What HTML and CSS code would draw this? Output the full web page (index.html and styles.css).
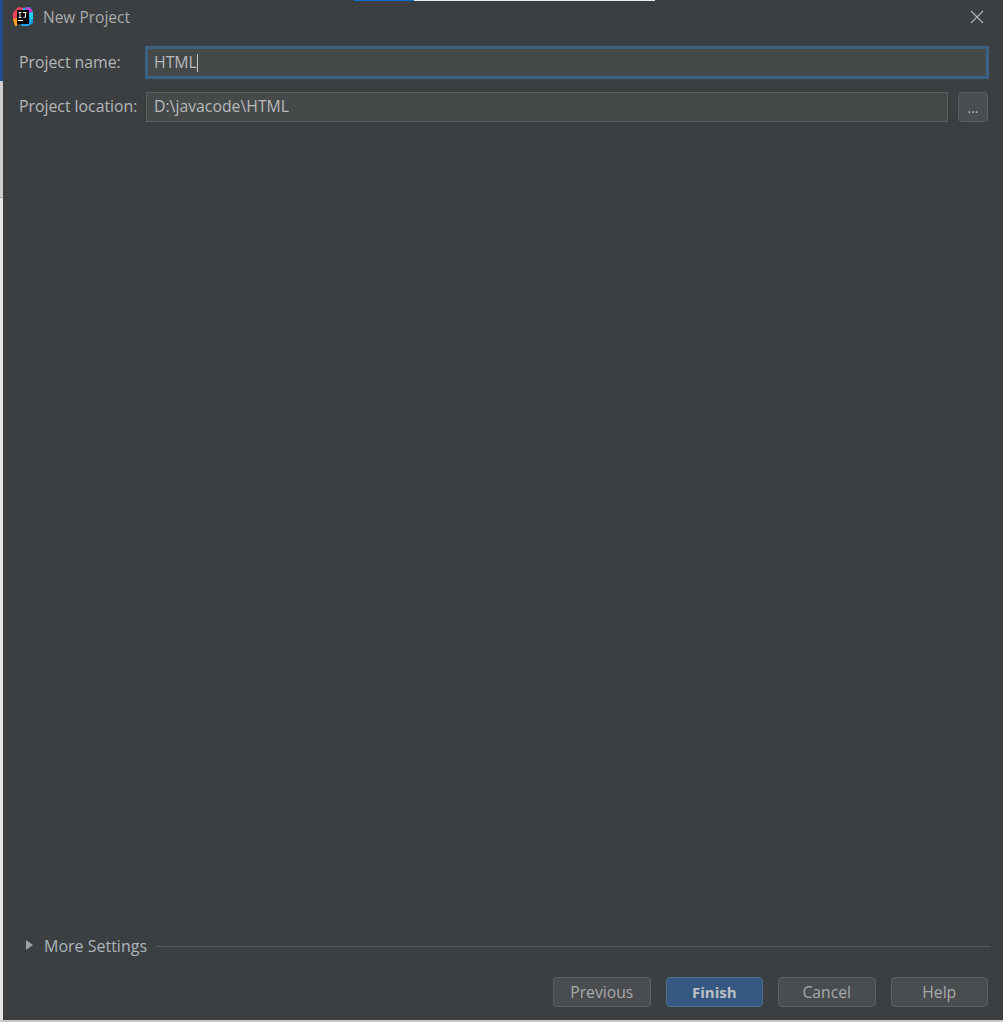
FILE: index.html
```html
<!DOCTYPE html>
<html lang="en">
<head>
  <meta charset="UTF-8" />
  <title>New Project</title>
  <link rel="stylesheet" href="styles.css">
</head>
<body>
  <div class="backdrop">
    <div class="backdrop-blue"></div>
    <div class="backdrop-grey"></div>
    <div class="backdrop-grey backdrop-lower"></div>
  </div>

  <div class="dialog">
    <div class="top-strip"><span class="strip-blue"></span><span class="strip-white"></span></div>

    <div class="titlebar">
      <svg class="logo" width="21" height="20" viewBox="0 0 21 20">
        <path d="M0 6 L5 0 L11 1 L9 10 L3 19 L0 13 Z" fill="#f0415e" />
        <path d="M0 12 L4 11 L4 19 L2 19 Z" fill="#f8a11c" />
        <path d="M10 1 L17 0 L20 5 L20 16 L15 19 L8 19 Z" fill="#17a6e8" />
        <path d="M12 0 L18 1 L20 6 L16 7 Z" fill="#c73fd0" />
        <path d="M16 6 L20 5 L20 12 L17 12 Z" fill="#22d3ee" />
        <rect x="4" y="3" width="12" height="14" fill="#000" />
        <rect x="5" y="13" width="5" height="1" fill="#fff" />
        <path d="M5.5 5.5 H8.5 M7 5.5 V10.5 M5.5 10.5 H8.5 M10 5.5 H13.5 M12.5 5.5 V10 L10.5 10.5" stroke="#fff" stroke-width="1" fill="none" />
      </svg>
      <span class="title">New Project</span>
      <svg class="close" width="14" height="14" viewBox="0 0 14 14">
        <path d="M1 1 L13 13 M13 1 L1 13" stroke="#b4b6b7" stroke-width="1.1" />
      </svg>
    </div>

    <div class="form">
      <div class="row row-name">
        <label class="label">Project name:</label>
        <div class="input input-focus">HTML<span class="caret"></span></div>
      </div>
      <div class="row row-location">
        <label class="label">Project location:</label>
        <div class="input">D:\javacode\HTML</div>
        <button class="browse">...</button>
      </div>
    </div>

    <div class="more">
      <span class="arrow"></span>
      <span class="more-text">More Settings</span>
      <span class="more-line"></span>
    </div>

    <div class="buttons">
      <button class="btn">Previous</button>
      <button class="btn btn-primary">Finish</button>
      <button class="btn">Cancel</button>
      <button class="btn">Help</button>
    </div>
  </div>
  <div class="bottom-strip"></div>
</body>
</html>
```

FILE: styles.css
```css
* {
  margin: 0;
  padding: 0;
  box-sizing: border-box;
  font-family: 'Open Sans', 'Noto Sans', sans-serif;
}

html, body {
  height: 1022px;
  overflow: hidden;
}

body {
  display: flex;
  flex-wrap: wrap;
  background: #c8c8c8;
  color: #b4b7b9;
  font-size: 15.8px;
}

.backdrop {
  width: 3px;
  height: 1020px;
  display: flex;
  flex-direction: column;
}

.backdrop-blue {
  height: 81px;
  background: #234d8f;
}

.backdrop-grey {
  height: 116px;
  background: #cfcfcf;
}

.backdrop-lower {
  flex: 1;
  background: #e6e6e6;
  border-top: 1px solid #a8a8a8;
}

.dialog {
  position: relative;
  width: 1000px;
  height: 1020px;
  background: #3c3f41;
  display: flex;
  flex-direction: column;
}

.bottom-strip {
  width: 100%;
  height: 2px;
  background: #c8c8c8;
}

.top-strip {
  position: absolute;
  top: 0;
  left: 351px;
  display: flex;
  height: 1px;
}

.strip-blue {
  width: 60px;
  background: #0a6fd0;
}

.strip-white {
  width: 241px;
  background: #e8e8e8;
}

.titlebar {
  height: 36px;
  display: flex;
  align-items: center;
  padding-left: 10px;
  padding-right: 19px;
}

.logo {
  margin-right: 9px;
  margin-top: -3px;
}

.title {
  flex: 1;
  margin-top: -2px;
  font-size: 15.5px;
  color: #a9acae;
}

.close {
  margin-top: -3px;
}

.form {
  padding: 10px 14px 0 16px;
  height: 899px;
}

.row {
  display: flex;
  align-items: center;
}

.row-name {
  height: 33px;
}

.row-location {
  height: 30px;
  margin-top: 13px;
  padding-right: 1px;
}

.label {
  width: 126px;
  margin-top: -2px;
  white-space: nowrap;
  color: #b4b7b9;
}

.row-name .input {
  margin-left: 0;
  flex: 1;
  height: 33px;
  padding-left: 6px;
  border: 3px solid #3a6083;
}

.input {
  flex: 1;
  height: 30px;
  margin-left: 1px;
  padding-left: 7px;
  line-height: 27px;
  background: #45494a;
  border: 1px solid #5c5f60;
  color: #b8babc;
}

.caret {
  display: inline-block;
  width: 1px;
  height: 18px;
  vertical-align: -4px;
  background: #c4c6c8;
}

.browse {
  width: 30px;
  height: 30px;
  margin-left: 10px;
  background: #4b4e50;
  border: 1px solid #5b5e60;
  border-radius: 4px;
  color: #b4b7b9;
  font-size: 14px;
}

.more {
  display: flex;
  align-items: center;
  height: 22px;
  padding-left: 23px;
  padding-right: 13px;
}

.arrow {
  width: 0;
  height: 0;
  border-left: 7px solid #a0a2a4;
  border-top: 5px solid transparent;
  border-bottom: 5px solid transparent;
  margin-top: -3px;
}

.more-text {
  margin-left: 11px;
  font-size: 16px;
  color: #a9b4bd;
}

.more-line {
  flex: 1;
  height: 1px;
  margin-left: 8px;
  background: #56595b;
}

.buttons {
  display: flex;
  justify-content: flex-end;
  gap: 15px;
  padding-top: 20px;
  padding-right: 15px;
}

.btn {
  width: 97.5px;
  height: 30px;
  background: #4a4d4f;
  border: 1px solid #5e6163;
  border-radius: 4px;
  color: #a6a9ab;
  font-size: 15.7px;
}

.btn-primary {
  background: #365880;
  border-color: #4c708c;
  color: #bbc0c5;
  font-size: 15px;
  font-weight: bold;
}
```
